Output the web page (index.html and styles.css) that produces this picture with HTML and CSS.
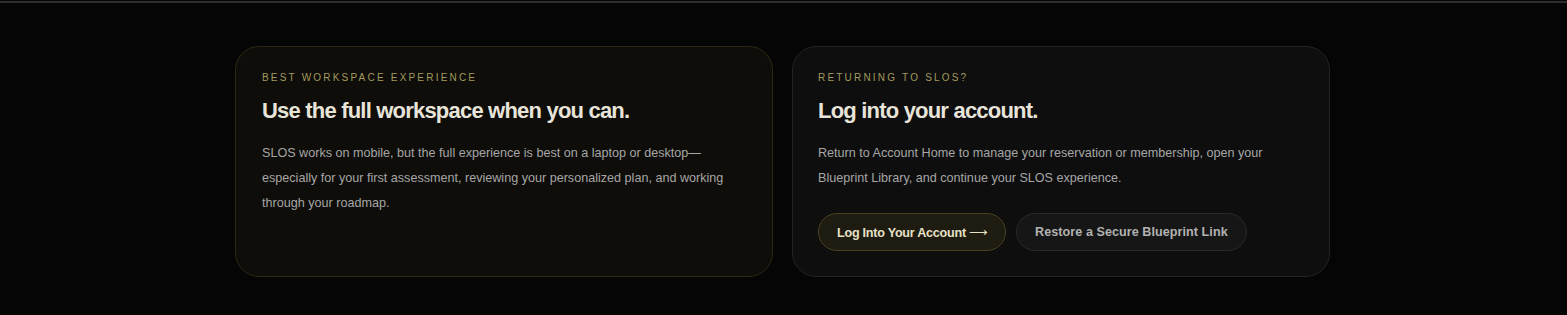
FILE: index.html
```html
<!DOCTYPE html>
<html lang="en">
<head>
    <meta charset="UTF-8">
    <meta name="viewport" content="width=device-width, initial-scale=1.0">
    <title>SLOS - Workspace</title>
    <link rel="stylesheet" href="styles.css">
</head>
<body>
    <div class="topline"></div>
    <section class="panels">
        <div class="card card-gold">
            <p class="eyebrow">Best Workspace Experience</p>
            <h2>Use the full workspace when you can.</h2>
            <p class="copy">SLOS works on mobile, but the full experience is best on a laptop or desktop—especially for your first assessment, reviewing your personalized plan, and working through your roadmap.</p>
        </div>

        <div class="card">
            <p class="eyebrow">Returning to SLOS?</p>
            <h2>Log into your account.</h2>
            <p class="copy">Return to Account Home to manage your reservation or membership, open your Blueprint Library, and continue your SLOS experience.</p>
            <div class="actions">
                <a href="#" class="btn btn-primary">Log Into Your Account <span class="arrow">⟶</span></a>
                <a href="#" class="btn btn-ghost">Restore a Secure Blueprint Link</a>
            </div>
        </div>
    </section>
</body>
</html>
```

FILE: styles.css
```css
body {
    margin: 0;
    background-color: #050505;
    font-family: "Liberation Sans", Arial, sans-serif;
    color: #e6e2d6;
}
.topline {
    margin-top: 1px;
    height: 2px;
    background-color: #2c2c2c;
}
.panels {
    max-width: 1095px;
    margin: 43px auto 0;
    display: grid;
    grid-template-columns: 1fr 1fr;
    gap: 19px;
    transform: translateX(-1px);
}
.card {
    box-sizing: border-box;
    height: 231px;
    padding: 25px 25px;
    border: 1px solid #232323;
    border-radius: 24px;
    background-color: #0e0e0e;
}
.card-gold {
    padding-left: 26px;
    border-color: #2d2811;
    background-color: #0e0d09;
}
.eyebrow {
    margin: 0;
    font-size: 10px;
    letter-spacing: 2.2px;
    text-transform: uppercase;
    color: #a39a5c;
}
h2 {
    margin: 15px 0 0;
    font-size: 22px;
    font-weight: bold;
    letter-spacing: -0.8px;
    color: #e8e4da;
}
.copy {
    margin: 17px 0 0;
    font-size: 12.6px;
    line-height: 25px;
    color: #a6a6a6;
}
.actions {
    display: flex;
    gap: 10px;
    margin-top: 22px;
}
.btn {
    display: inline-block;
    padding: 11px 18px 10px;
    border-radius: 999px;
    font-size: 12.6px;
    font-weight: bold;
    text-decoration: none;
}
.btn-primary {
    letter-spacing: -0.25px;
    background-color: #1e1b11;
    border: 1px solid #4a4120;
    color: #e6e0c6;
}
.arrow {
    font-weight: normal;
    letter-spacing: -1px;
}
.btn-ghost {
    letter-spacing: 0.05px;
    background-color: #161616;
    border: 1px solid #2a2a2a;
    color: #b2b2b2;
}
```
